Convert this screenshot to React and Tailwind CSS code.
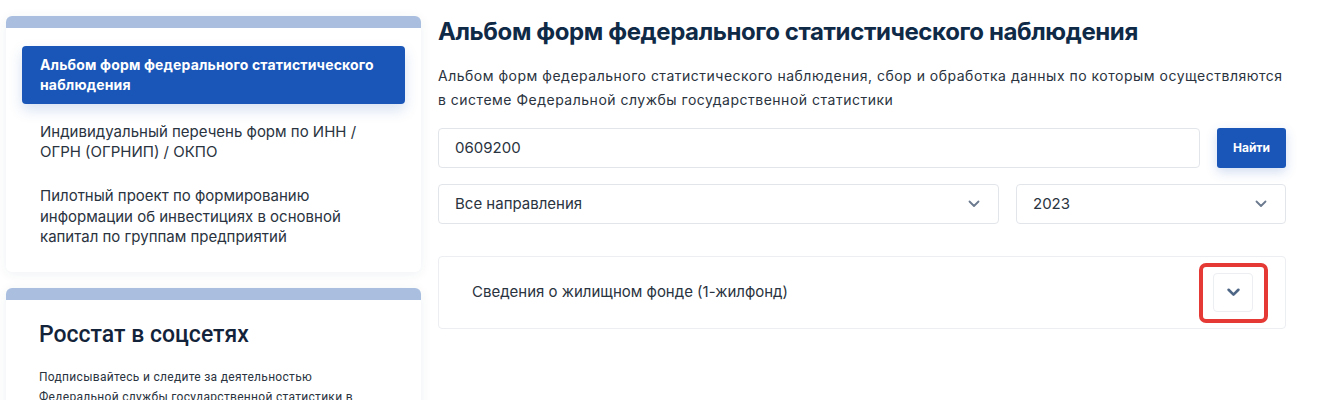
import React from 'react';

const Chevron = ({ className, width = 1.8 }) => (
  <svg viewBox="0 0 12 8" className={className} fill="none">
    <path d="M1.5 1.5L6 6l4.5-4.5" stroke="currentColor" strokeWidth={width} strokeLinecap="round" strokeLinejoin="round" />
  </svg>
);

const menu = [
  'Альбом форм федерального статистического наблюдения',
  'Индивидуальный перечень форм по ИНН / ОГРН (ОГРНИП) / ОКПО',
  'Пилотный проект по формированию информации об инвестициях в основной капитал по группам предприятий',
];

export default function App() {
  return (
    <div className="h-[400px] bg-white font-['Inter','Liberation_Sans',sans-serif] text-[#222b38] overflow-hidden">
      <div className="flex gap-[17px] pl-[6px] pt-4">
        {/* sidebar */}
        <aside className="w-[415px] shrink-0 flex flex-col gap-4">
          <div className="rounded-[6px] bg-white shadow-[0_2px_12px_rgba(30,50,90,0.07)] overflow-hidden">
            <div className="h-3 bg-[#aabfdf]" />
            <div className="px-4 pt-[18px] pb-[15px]">
              <div className="rounded-[4px] bg-[#1a56b8] px-[18px] py-[9px] text-[14px] font-bold leading-[20px] tracking-[0.15px] text-white shadow-[0_6px_14px_rgba(26,86,184,0.18)]">
                {menu[0]}
              </div>
              <div className="mt-[9px] px-[18px] py-[9px] text-[15px] leading-[20px] text-[#2a3340] pr-[40px]">
                {menu[1]}
              </div>
              <div className="mt-[6px] px-[18px] py-[9px] text-[15px] leading-[20.5px] text-[#2a3340] pr-[40px]">
                {menu[2]}
              </div>
            </div>
          </div>

          <div className="rounded-[6px] bg-white shadow-[0_2px_12px_rgba(30,50,90,0.07)] overflow-hidden">
            <div className="h-3 bg-[#aabfdf]" />
            <div className="px-[33px] pt-[18px]">
              <h2 className="font-['Roboto',sans-serif] text-[23px] font-medium leading-[34px] text-[#13243a]">
                Росстат в соцсетях
              </h2>
              <p className="mt-[15px] font-['Roboto',sans-serif] text-[12px] leading-[20px] tracking-[0.3px] text-[#2a3340] w-[340px]">
                Подписывайтесь и следите за деятельностью Федеральной службы государственной статистики в социальных сетях
              </p>
            </div>
          </div>
        </aside>

        {/* main */}
        <main className="w-[848px] shrink-0">
          <h1 className="text-[24px] font-bold leading-8 tracking-[-0.4px] text-[#0f2a47]">
            Альбом форм федерального статистического наблюдения
          </h1>
          <p className="mt-4 text-[14px] leading-6 tracking-[0.5px] text-[#2a3340]">
            Альбом форм федерального статистического наблюдения, сбор и обработка данных по которым осуществляются в системе Федеральной службы государственной статистики
          </p>

          <div className="mt-4 flex gap-[17px]">
            <div className="flex h-10 flex-1 items-center rounded-[4px] border border-[#e2e5ea] px-4 text-[15px] text-[#2a3340]">
              0609200
            </div>
            <button className="h-10 w-[69px] rounded-[3px] bg-[#1a56b8] text-[12px] font-bold text-white shadow-[0_4px_12px_rgba(26,86,184,0.2)]">
              Найти
            </button>
          </div>

          <div className="mt-4 flex gap-[17px]">
            <div className="flex h-10 w-[561px] items-center justify-between rounded-[4px] border border-[#e2e5ea] pl-4 pr-[18px] text-[15px] text-[#2a3340]">
              <span>Все направления</span>
              <Chevron className="h-[8px] w-[12px] text-[#6b7a8e]" />
            </div>
            <div className="flex h-10 flex-1 items-center justify-between rounded-[4px] border border-[#e2e5ea] pl-4 pr-[18px] text-[15px] text-[#2a3340]">
              <span>2023</span>
              <Chevron className="h-[8px] w-[12px] text-[#6b7a8e]" />
            </div>
          </div>

          <div className="mt-8 flex items-center justify-between rounded-[4px] border border-[#eceef2] py-4 pl-[33px] pr-[32px]">
            <span className="text-[15px] text-[#2a3340]">Сведения о жилищном фонде (1-жилфонд)</span>
            <div className="relative">
              <button className="flex h-[39px] w-[40px] items-center justify-center rounded-[4px] border border-[#eceef2] bg-white">
                <Chevron className="h-[9px] w-[13px] text-[#4f6787]" width={2.4} />
              </button>
              <div className="pointer-events-none absolute -left-[14px] -top-[10px] h-[60px] w-[69px] rounded-[7px] border-[4px] border-[#e53935]" />
            </div>
          </div>
        </main>
      </div>
    </div>
  );
}
